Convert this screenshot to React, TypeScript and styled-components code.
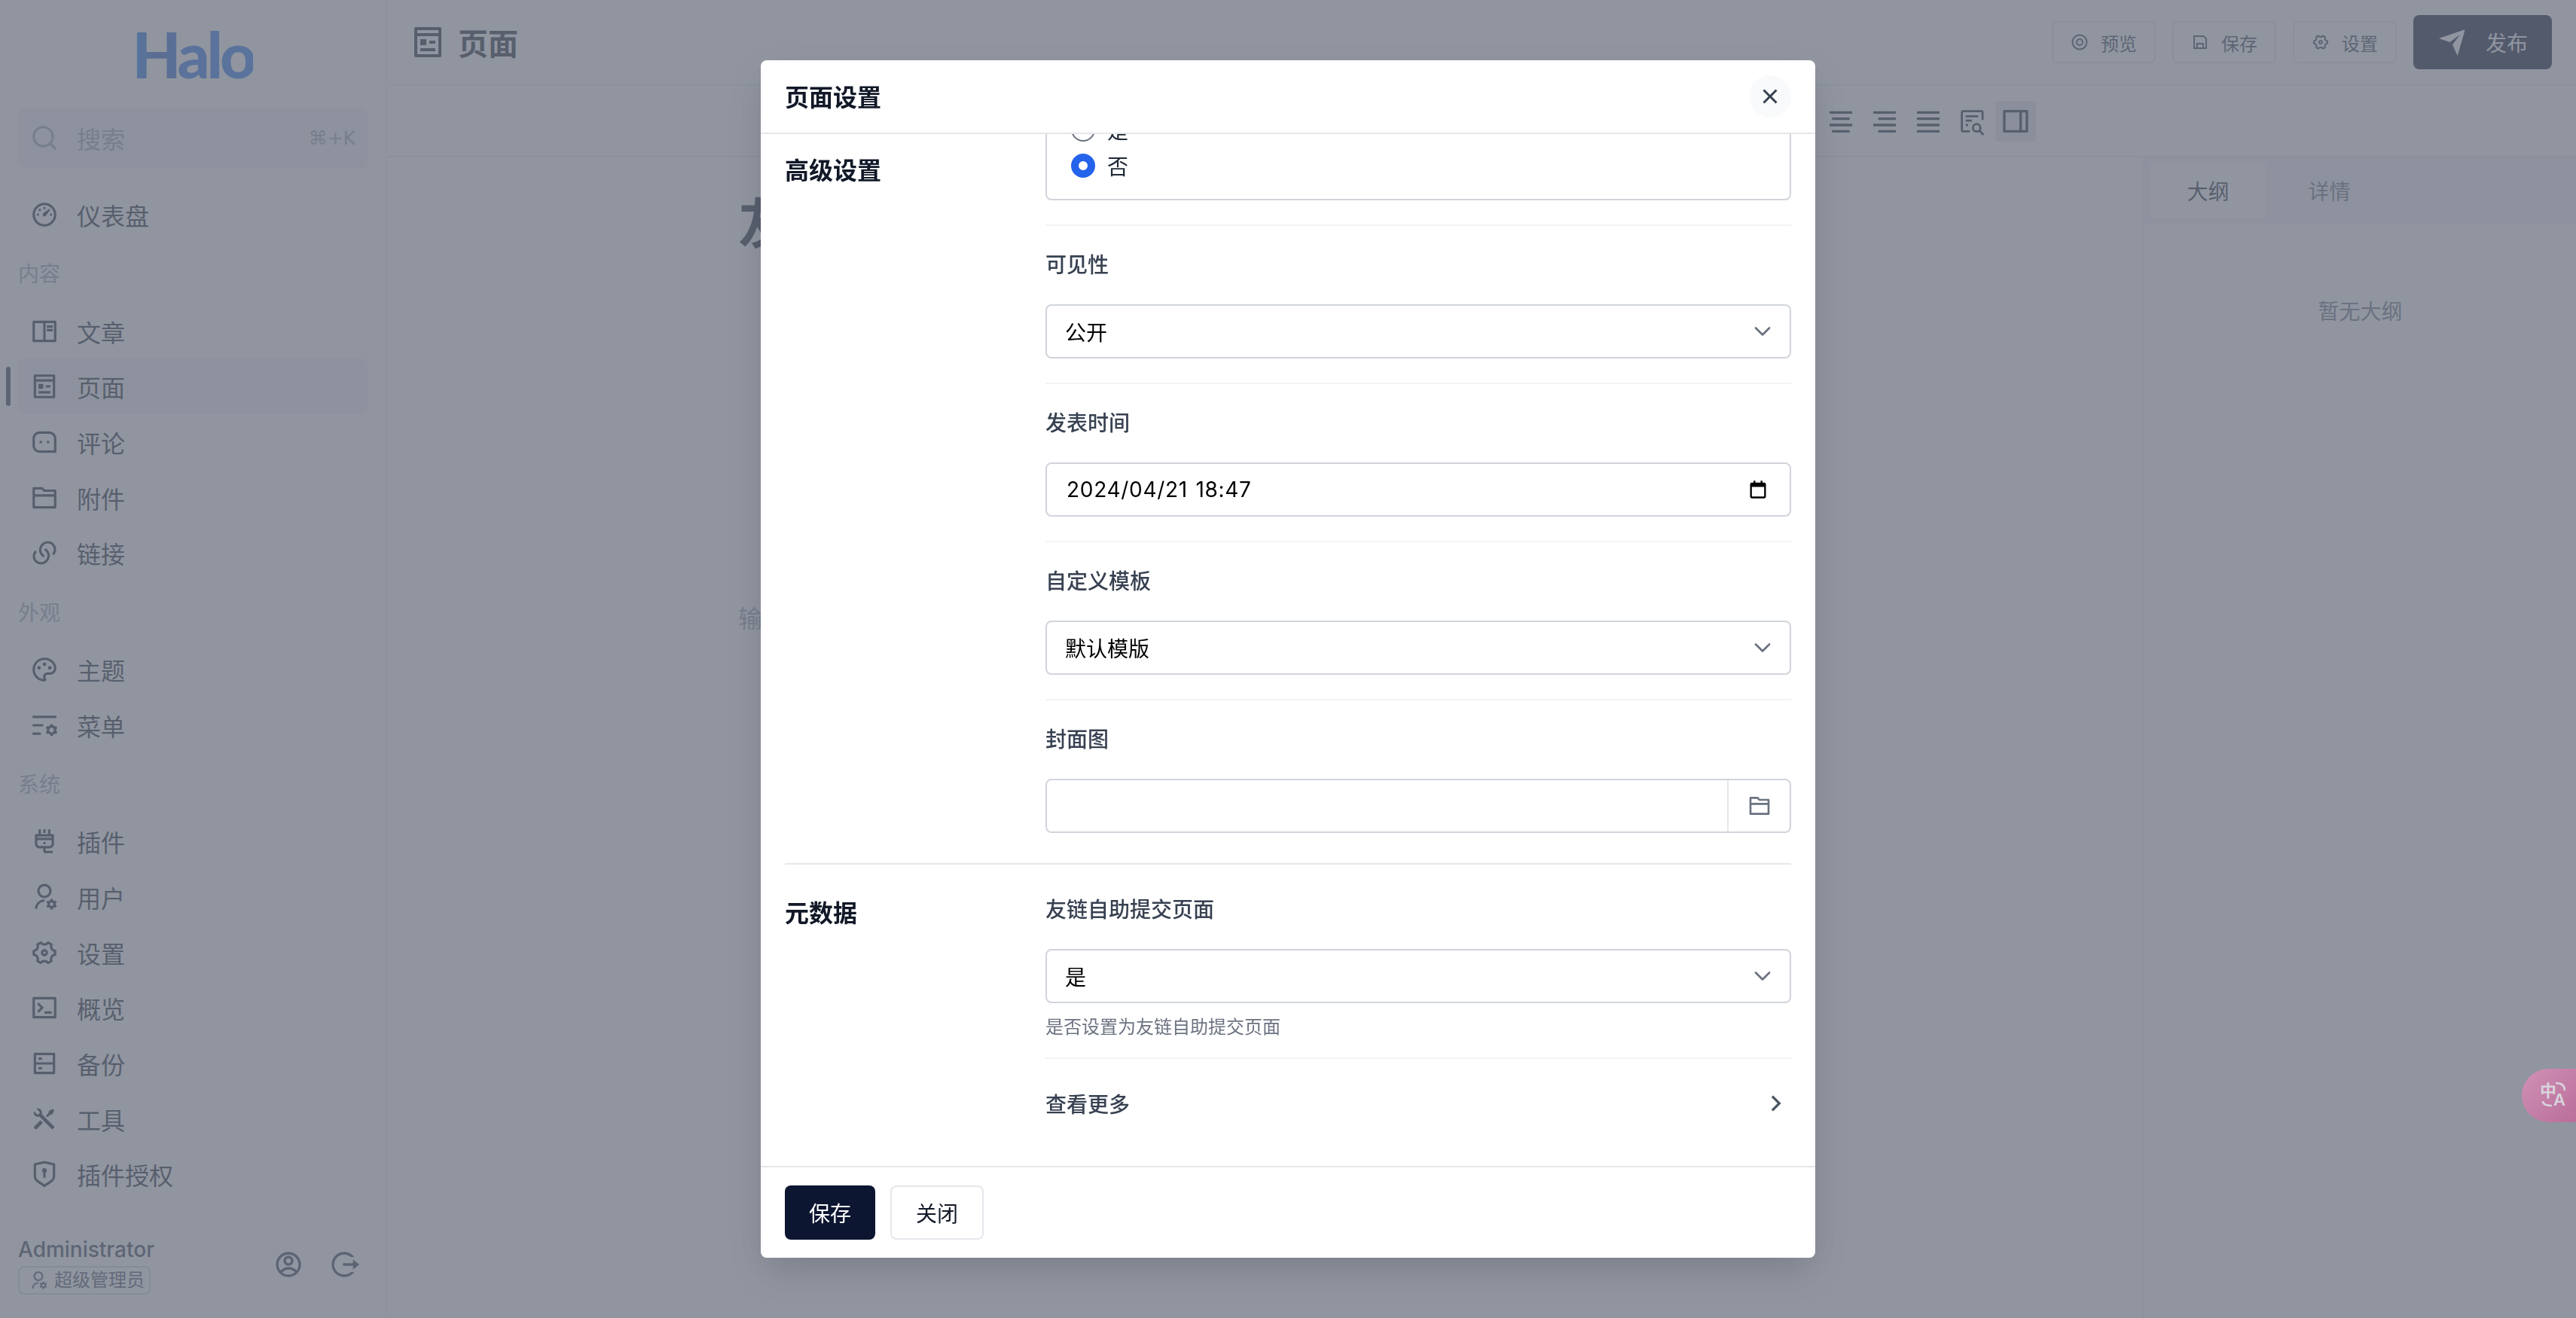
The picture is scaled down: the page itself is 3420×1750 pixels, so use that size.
import React from 'react';
import styled, { createGlobalStyle } from 'styled-components';
import {
  RiDashboard3Line,
  RiBookReadLine,
  RiPagesLine,
  RiMessage3Line,
  RiFolder2Line,
  RiLinksLine,
  RiPaletteLine,
  RiListSettingsLine,
  RiPlug2Line,
  RiUserSettingsLine,
  RiSettings4Line,
  RiTerminalBoxLine,
  RiServerLine,
  RiToolsFill,
  RiShieldKeyholeLine,
  RiAccountCircleLine,
  RiLogoutCircleRLine,
  RiSearchLine,
  RiSaveLine,
  RiSendPlaneFill,
  RiAlignCenter,
  RiAlignRight,
  RiAlignJustify,
  RiLayoutRightLine,
  RiCloseLine,
  RiArrowRightSLine,
} from 'react-icons/ri';

const Global = createGlobalStyle`
  html, body {
    margin: 0;
    padding: 0;
    height: 100%;
    overflow: hidden;
    background: #fff;
    font-family: Inter, "Noto Sans CJK SC", sans-serif;
  }
  * {
    box-sizing: border-box;
  }
`;

const Page = styled.div`
  display: grid;
  grid-template-columns: 514px 1fr;
  width: 3420px;
  height: 1750px;
  overflow: hidden;
`;

const Sidebar = styled.aside`
  display: flex;
  flex-direction: column;
  border-right: 2px solid #f3f4f6;
  height: 100%;
  padding-bottom: 31px;
`;

const LogoBox = styled.div`
  display: flex;
  align-items: center;
  justify-content: center;
  height: 143px;
`;

const Logo = styled.span`
  font-family: Lato, sans-serif;
  font-weight: 900;
  font-size: 84px;
  line-height: 1;
  letter-spacing: -4px;
  color: transparent;
  background: linear-gradient(90deg, #1a82f5 0%, #2f5fc0 22%, #2b75ec 45%, #2a78ee 100%);
  -webkit-background-clip: text;
  background-clip: text;
`;

const SearchBox = styled.div`
  display: flex;
  align-items: center;
  gap: 24px;
  height: 80px;
  margin: 0 24px;
  padding: 0 16px;
  border-radius: 8px;
  background: #f3f4f6;
  color: #9ca3af;
  font-size: 32px;
`;

const SearchKey = styled.span`
  margin-left: auto;
  font-size: 25px;
  font-family: "DejaVu Sans", Inter, sans-serif;
`;

const Nav = styled.nav`
  display: flex;
  flex-direction: column;
  margin-top: 25px;
  padding: 0 24px;
`;

const NavItem = styled.div<{ $active?: boolean }>`
  position: relative;
  display: flex;
  align-items: center;
  gap: 24px;
  height: 73.7px;
  padding-left: 16px;
  border-radius: 8px;
  font-size: 32px;
  color: #1f2937;
  background: ${(p) => (p.$active ? '#f3f4f6' : 'transparent')};
`;

const ActiveBar = styled.span`
  position: absolute;
  left: -16px;
  top: 11px;
  width: 6px;
  height: 52px;
  border-radius: 4px;
  background: #334155;
`;

const NavGroup = styled.div`
  display: flex;
  align-items: center;
  height: 81px;
  font-size: 28px;
  color: #9ca3af;
`;

const UserBar = styled.div`
  display: flex;
  align-items: center;
  justify-content: space-between;
  margin-top: auto;
  padding: 0 35px 0 24px;
`;

const UserName = styled.div`
  font-size: 28px;
  line-height: 40px;
  font-weight: 500;
  color: #374151;
`;

const RoleBadge = styled.div`
  display: flex;
  align-items: center;
  gap: 8px;
  width: 176px;
  height: 38px;
  margin-top: 2px;
  padding-left: 12px;
  border: 2px solid #d1d5db;
  border-radius: 8px;
  font-size: 24px;
  line-height: 30px;
  color: #4b5563;
`;

const UserActions = styled.div`
  display: flex;
  gap: 34px;
  color: #374151;
`;

const Main = styled.main`
  display: flex;
  flex-direction: column;
  min-width: 0;
`;

const Header = styled.header`
  display: flex;
  align-items: center;
  justify-content: space-between;
  height: 114px;
  padding: 0 32px 0 30px;
  border-bottom: 2px solid #f3f4f6;
`;

const HeaderTitle = styled.h1`
  display: flex;
  align-items: center;
  gap: 16px;
  margin: 0;
  font-size: 40px;
  font-weight: 700;
  color: #1f2937;
`;

const HeaderActions = styled.div`
  display: flex;
  align-items: center;
  gap: 22px;
`;

const GhostButton = styled.div`
  display: flex;
  align-items: center;
  justify-content: center;
  gap: 16px;
  width: 138px;
  height: 56px;
  border: 2px solid #e5e7eb;
  border-radius: 8px;
  font-size: 24px;
  color: #374151;
`;

const PublishButton = styled.div`
  display: flex;
  align-items: center;
  justify-content: center;
  gap: 24px;
  width: 184px;
  height: 72px;
  border-radius: 8px;
  font-size: 28px;
  color: #fff;
  background: #0d1631;
`;

const Toolbar = styled.div`
  display: flex;
  align-items: center;
  justify-content: flex-end;
  gap: 4px;
  height: 95px;
  padding-right: 717px;
  border-bottom: 2px solid #e5e7eb;
`;

const ToolButton = styled.div<{ $active?: boolean }>`
  display: flex;
  align-items: center;
  justify-content: center;
  width: 54px;
  height: 54px;
  border-radius: 4px;
  color: #1f2937;
  background: ${(p) => (p.$active ? '#e5e7eb' : 'transparent')};
`;

const Workspace = styled.div`
  display: grid;
  grid-template-columns: 1fr 575px;
  flex: 1;
  min-height: 0;
`;

const Editor = styled.div`
  padding: 40px 0 0 466px;
`;

const EditorTitle = styled.div`
  font-size: 72px;
  line-height: 96px;
  font-weight: 700;
  color: #1f2937;
`;

const EditorPlaceholder = styled.div`
  margin-top: 453px;
  font-size: 32px;
  line-height: 48px;
  color: #9ca3af;
`;

const SidePanel = styled.div`
  border-left: 2px solid #f3f4f6;
`;

const Tabs = styled.div`
  display: flex;
  align-items: center;
  height: 88px;
  padding: 0 8px;
  background: #f3f4f6;
`;

const Tab = styled.div<{ $active?: boolean }>`
  display: flex;
  align-items: center;
  justify-content: center;
  width: 153px;
  height: 72px;
  margin-right: 8px;
  border-radius: 4px;
  font-size: 28px;
  color: ${(p) => (p.$active ? '#1f2937' : '#6b7280')};
  background: ${(p) => (p.$active ? '#fff' : 'transparent')};
`;

const EmptyOutline = styled.div`
  margin-top: 97px;
  font-size: 28px;
  line-height: 40px;
  text-align: center;
  color: #6b7280;
`;

const Overlay = styled.div`
  position: fixed;
  inset: 0;
  display: flex;
  align-items: center;
  justify-content: center;
  background: rgba(107, 114, 128, 0.75);
`;

const Modal = styled.div`
  display: flex;
  flex-direction: column;
  width: 1400px;
  height: 1590px;
  overflow: hidden;
  border-radius: 8px;
  background: #fff;
  box-shadow: 0 20px 50px -6px rgba(0, 0, 0, 0.16);
`;

const ModalHeader = styled.div`
  display: flex;
  align-items: center;
  justify-content: space-between;
  flex: none;
  height: 98px;
  padding: 0 32px;
  border-bottom: 2px solid #e5e7eb;
`;

const ModalTitle = styled.div`
  padding-bottom: 2px;
  font-size: 32px;
  font-weight: 700;
  color: #111827;
`;

const CloseButton = styled.div`
  display: flex;
  align-items: center;
  justify-content: center;
  width: 56px;
  height: 56px;
  border-radius: 50%;
  color: #374151;
  background: #f9fafb;
`;

const ModalBody = styled.div`
  flex: 1;
  min-height: 0;
  overflow: hidden;
  padding: 0 32px;
`;

const Section = styled.section<{ $last?: boolean }>`
  display: grid;
  grid-template-columns: 346px 1fr;
  padding-bottom: ${(p) => (p.$last ? '0' : '8px')};
  border-bottom: ${(p) => (p.$last ? 'none' : '2px solid #e5e7eb')};
`;

const SectionTitle = styled.h2<{ $top: number }>`
  margin: 0;
  padding-top: ${(p) => p.$top}px;
  font-size: 32px;
  line-height: 48px;
  font-weight: 700;
  color: #111827;
`;

const RadioField = styled.div`
  padding-bottom: 32px;
  border-bottom: 2px solid #f3f4f6;
`;

const RadioBox = styled.div`
  display: flex;
  flex-direction: column;
  gap: 8px;
  height: 134px;
  margin-top: -46px;
  padding: 18px 32px;
  border: 2px solid #d1d5db;
  border-radius: 8px;
`;

const RadioRow = styled.div`
  display: flex;
  align-items: center;
  gap: 16px;
  height: 40px;
  font-size: 28px;
  color: #1f2937;
`;

const RadioDot = styled.span<{ $checked?: boolean }>`
  width: 32px;
  height: 32px;
  border-radius: 50%;
  border: ${(p) => (p.$checked ? '10px solid #2563eb' : '2px solid #6b7280')};
  background: #fff;
`;

const Field = styled.div<{ $flush?: boolean; $noLine?: boolean }>`
  padding: ${(p) => (p.$flush ? '40px' : '32px')} 0 32px;
  border-bottom: ${(p) => (p.$noLine ? 'none' : '2px solid #f3f4f6')};
`;

const FieldLabel = styled.div`
  margin-bottom: 32px;
  font-size: 28px;
  line-height: 40px;
  font-weight: 500;
  color: #374151;
`;

const InputBox = styled.div`
  display: flex;
  align-items: center;
  justify-content: space-between;
  height: 72px;
  padding: 0 18px 0 24px;
  border: 2px solid #d1d5db;
  border-radius: 8px;
  font-size: 28px;
  color: #000;
`;

const DateValue = styled.span`
  padding-left: 2px;
  font-size: 28px;
  letter-spacing: 0.7px;
  word-spacing: 2px;
`;

const CalendarGlyph = styled.svg`
  margin-right: 10px;
`;

const FileBox = styled.div`
  display: flex;
  justify-content: flex-end;
  height: 72px;
  border: 2px solid #d1d5db;
  border-radius: 8px;
`;

const FileButton = styled.div`
  display: flex;
  align-items: center;
  justify-content: center;
  width: 83px;
  border-left: 2px solid #e5e7eb;
  color: #6b7280;
`;

const HelpText = styled.div`
  margin: 16px 0 -8px;
  font-size: 24px;
  line-height: 32px;
  color: #6b7280;
`;

const MoreRow = styled.div`
  display: flex;
  align-items: center;
  justify-content: space-between;
  height: 118px;
  font-size: 28px;
  font-weight: 500;
  color: #374151;
`;

const ModalFooter = styled.div`
  display: flex;
  gap: 20px;
  flex: none;
  height: 122px;
  padding: 24px 32px;
  border-top: 2px solid #e5e7eb;
`;

const SaveButton = styled.div`
  display: flex;
  align-items: center;
  justify-content: center;
  width: 120px;
  height: 72px;
  border-radius: 8px;
  font-size: 28px;
  color: #fff;
  background: #0d1631;
`;

const CloseTextButton = styled.div`
  display: flex;
  align-items: center;
  justify-content: center;
  width: 124px;
  height: 72px;
  border: 2px solid #e5e7eb;
  border-radius: 8px;
  font-size: 28px;
  color: #111827;
`;

const TranslateTab = styled.div`
  position: fixed;
  right: 0;
  top: 1419px;
  width: 72px;
  height: 71px;
  border-radius: 36px 0 0 36px;
  background: linear-gradient(135deg, #d191b6 0%, #b96f9a 100%);
  color: #d8d3dc;
`;

const TranslateHan = styled.span`
  position: absolute;
  left: 24px;
  top: 17px;
  font-size: 22px;
  line-height: 24px;
  font-weight: 700;
`;

const TranslateLatin = styled.span`
  position: absolute;
  left: 42px;
  top: 29px;
  font-size: 22px;
  line-height: 24px;
  font-weight: 600;
`;

const TranslateArcs = styled.svg`
  position: absolute;
  left: 25px;
  top: 16px;
`;

const Chevron = () => (
  <svg width="36" height="36" viewBox="0 0 20 20" fill="none">
    <path d="M5 7.5l5 5 5-5" stroke="#6b7280" strokeWidth="1.5" strokeLinecap="round" strokeLinejoin="round" />
  </svg>
);

const CalendarIcon = () => (
  <CalendarGlyph width="28" height="28" viewBox="0 0 24 24" fill="#000">
    <path d="M7 2h2v2h6V2h2v2h2a2 2 0 0 1 2 2v14a2 2 0 0 1-2 2H5a2 2 0 0 1-2-2V6a2 2 0 0 1 2-2h2V2zM5 9v11h14V9H5z" />
  </CalendarGlyph>
);

const FindIcon = () => (
  <svg width="40" height="40" viewBox="0 0 24 24" fill="none" stroke="currentColor" strokeWidth="1.7">
    <path d="M10.5 20H5a1 1 0 0 1-1-1V5a1 1 0 0 1 1-1h14.5a1 1 0 0 1 1 1v6" />
    <path d="M7 8h10M7 11.5h5M7 15h2" />
    <circle cx="15.8" cy="17.2" r="3" />
    <path d="M18 19.4l3.2 3.4" />
  </svg>
);

const PreviewIcon = () => (
  <svg width="24" height="24" viewBox="0 0 24 24" fill="none" stroke="currentColor" strokeWidth="2">
    <circle cx="12" cy="12" r="9.5" />
    <circle cx="12" cy="12" r="4" />
  </svg>
);

const topNav = [
  { group: '内容', items: [
    { label: '文章', icon: RiBookReadLine },
    { label: '页面', icon: RiPagesLine, active: true },
    { label: '评论', icon: RiMessage3Line },
    { label: '附件', icon: RiFolder2Line },
    { label: '链接', icon: RiLinksLine },
  ] },
  { group: '外观', items: [
    { label: '主题', icon: RiPaletteLine },
    { label: '菜单', icon: RiListSettingsLine },
  ] },
  { group: '系统', items: [
    { label: '插件', icon: RiPlug2Line },
    { label: '用户', icon: RiUserSettingsLine },
    { label: '设置', icon: RiSettings4Line },
    { label: '概览', icon: RiTerminalBoxLine },
    { label: '备份', icon: RiServerLine },
    { label: '工具', icon: RiToolsFill },
    { label: '插件授权', icon: RiShieldKeyholeLine },
  ] },
];

const App = () => (
  <>
    <Global />
    <Page>
      <Sidebar>
        <LogoBox>
          <Logo>Halo</Logo>
        </LogoBox>
        <SearchBox>
          <RiSearchLine size={38} />
          搜索
          <SearchKey>⌘+K</SearchKey>
        </SearchBox>
        <Nav>
          <NavItem>
            <RiDashboard3Line size={38} />
            仪表盘
          </NavItem>
          {topNav.map((g) => (
            <React.Fragment key={g.group}>
              <NavGroup>{g.group}</NavGroup>
              {g.items.map((item) => (
                <NavItem key={item.label} $active={item.active}>
                  {item.active && <ActiveBar />}
                  <item.icon size={38} />
                  {item.label}
                </NavItem>
              ))}
            </React.Fragment>
          ))}
        </Nav>
        <UserBar>
          <div>
            <UserName>Administrator</UserName>
            <RoleBadge>
              <RiUserSettingsLine size={26} />
              超级管理员
            </RoleBadge>
          </div>
          <UserActions>
            <RiAccountCircleLine size={40} />
            <RiLogoutCircleRLine size={40} />
          </UserActions>
        </UserBar>
      </Sidebar>
      <Main>
        <Header>
          <HeaderTitle>
            <RiPagesLine size={48} />
            页面
          </HeaderTitle>
          <HeaderActions>
            <GhostButton><PreviewIcon />预览</GhostButton>
            <GhostButton><RiSaveLine size={24} />保存</GhostButton>
            <GhostButton><RiSettings4Line size={24} />设置</GhostButton>
            <PublishButton><RiSendPlaneFill size={40} />发布</PublishButton>
          </HeaderActions>
        </Header>
        <Toolbar>
          <ToolButton><RiAlignCenter size={40} /></ToolButton>
          <ToolButton><RiAlignRight size={40} /></ToolButton>
          <ToolButton><RiAlignJustify size={40} /></ToolButton>
          <ToolButton><FindIcon /></ToolButton>
          <ToolButton $active><RiLayoutRightLine size={40} /></ToolButton>
        </Toolbar>
        <Workspace>
          <Editor>
            <EditorTitle>友链</EditorTitle>
            <EditorPlaceholder>输入 / 以选择输入类型</EditorPlaceholder>
          </Editor>
          <SidePanel>
            <Tabs>
              <Tab $active>大纲</Tab>
              <Tab>详情</Tab>
            </Tabs>
            <EmptyOutline>暂无大纲</EmptyOutline>
          </SidePanel>
        </Workspace>
      </Main>
    </Page>
    <Overlay>
      <Modal>
        <ModalHeader>
          <ModalTitle>页面设置</ModalTitle>
          <CloseButton><RiCloseLine size={36} /></CloseButton>
        </ModalHeader>
        <ModalBody>
          <Section>
            <SectionTitle $top={25}>高级设置</SectionTitle>
            <div>
              <RadioField>
                <RadioBox>
                  <RadioRow><RadioDot />是</RadioRow>
                  <RadioRow><RadioDot $checked />否</RadioRow>
                </RadioBox>
              </RadioField>
              <Field>
                <FieldLabel>可见性</FieldLabel>
                <InputBox>公开<Chevron /></InputBox>
              </Field>
              <Field>
                <FieldLabel>发表时间</FieldLabel>
                <InputBox>
                  <DateValue>2024/04/21 18:47</DateValue>
                  <CalendarIcon />
                </InputBox>
              </Field>
              <Field>
                <FieldLabel>自定义模板</FieldLabel>
                <InputBox>默认模版<Chevron /></InputBox>
              </Field>
              <Field $noLine>
                <FieldLabel>封面图</FieldLabel>
                <FileBox>
                  <FileButton><RiFolder2Line size={32} /></FileButton>
                </FileBox>
              </Field>
            </div>
          </Section>
          <Section $last>
            <SectionTitle $top={41}>元数据</SectionTitle>
            <div>
              <Field $flush>
                <FieldLabel>友链自助提交页面</FieldLabel>
                <InputBox>是<Chevron /></InputBox>
                <HelpText>是否设置为友链自助提交页面</HelpText>
              </Field>
              <MoreRow>
                查看更多
                <RiArrowRightSLine size={40} color="#4b5563" />
              </MoreRow>
            </div>
          </Section>
        </ModalBody>
        <ModalFooter>
          <SaveButton>保存</SaveButton>
          <CloseTextButton>关闭</CloseTextButton>
        </ModalFooter>
      </Modal>
    </Overlay>
    <TranslateTab>
      <TranslateHan>中</TranslateHan>
      <TranslateLatin>A</TranslateLatin>
      <TranslateArcs width="36" height="36" viewBox="0 0 36 36" fill="none" stroke="currentColor" strokeWidth="2.5">
        <path d="M20 3c7 0 12 3 12 10" />
        <path d="M3 27c0 4 3 6 12 6" />
      </TranslateArcs>
    </TranslateTab>
  </>
);

export default App;
